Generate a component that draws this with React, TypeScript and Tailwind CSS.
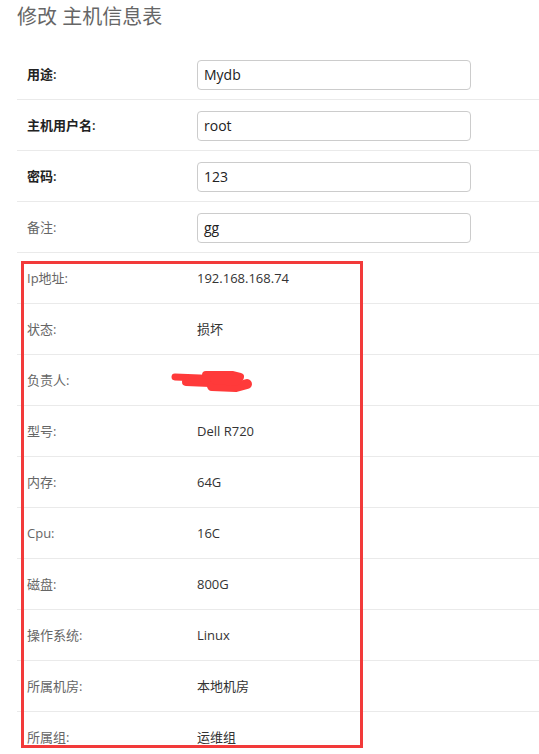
import React from 'react'

interface Row {
  label: string
  value: string
  input?: boolean
  strong?: boolean
}

const rows: Row[] = [
  { label: '用途:', value: 'Mydb', input: true, strong: true },
  { label: '主机用户名:', value: 'root', input: true, strong: true },
  { label: '密码:', value: '123', input: true, strong: true },
  { label: '备注:', value: 'gg', input: true },
  { label: 'Ip地址:', value: '192.168.168.74' },
  { label: '状态:', value: '损坏' },
  { label: '负责人:', value: '' },
  { label: '型号:', value: 'Dell R720' },
  { label: '内存:', value: '64G' },
  { label: 'Cpu:', value: '16C' },
  { label: '磁盘:', value: '800G' },
  { label: '操作系统:', value: 'Linux' },
  { label: '所属机房:', value: '本地机房' },
  { label: '所属组:', value: '运维组' },
]

// red marker scribble that hides the owner's name
function Scribble() {
  return (
    <svg width="84" height="28" viewBox="0 0 84 28" className="absolute left-[170px] top-[368px]">
      <g stroke="#ff3a3a" strokeLinecap="round" strokeLinejoin="round" fill="none">
        <path d="M5 9 L30 10 L50 11" strokeWidth="7" />
        <path d="M16 14 L40 15 L60 14" strokeWidth="8" />
        <path d="M36 7 L62 7 L70 9" strokeWidth="8" />
        <path d="M42 18 L66 19 L77 16" strokeWidth="10" />
        <path d="M46 11 L66 12" strokeWidth="11" />
      </g>
    </svg>
  )
}

export default function App() {
  return (
    <div
      className="relative h-[754px] overflow-hidden bg-white text-[13px] text-[#333]"
      style={{ fontFamily: '"Open Sans", "Noto Sans CJK SC", sans-serif' }}
    >
      {/* Title */}
      <div className="h-[49px] pl-[17px] pt-[3px] text-[20px] leading-[28px] text-[#666]">
        修改 主机信息表
      </div>

      {/* Table */}
      <div className="pl-[17px]">
        {rows.map((row) => (
          <div key={row.label} className="flex h-[51px] items-center border-b border-[#eaeaea] pt-[1px]">
            <div
              className={
                row.strong
                  ? 'w-[180px] pl-[10px] font-semibold text-[#222]'
                  : 'w-[180px] pl-[10px] text-[#666]'
              }
            >
              {row.label}
            </div>
            {row.input ? (
              <div className="flex h-[30px] w-[274px] items-center rounded-[4px] border border-[#ccc] px-[6px] text-[14px] text-[#222]">
                {row.value}
              </div>
            ) : (
              <div className="text-[#333]">{row.value}</div>
            )}
          </div>
        ))}
      </div>

      {/* Annotation overlay */}
      <div className="pointer-events-none absolute left-[21px] top-[261px] h-[487px] w-[342px] border-[3px] border-[#f23a3a]" />
      <Scribble />
    </div>
  )
}
